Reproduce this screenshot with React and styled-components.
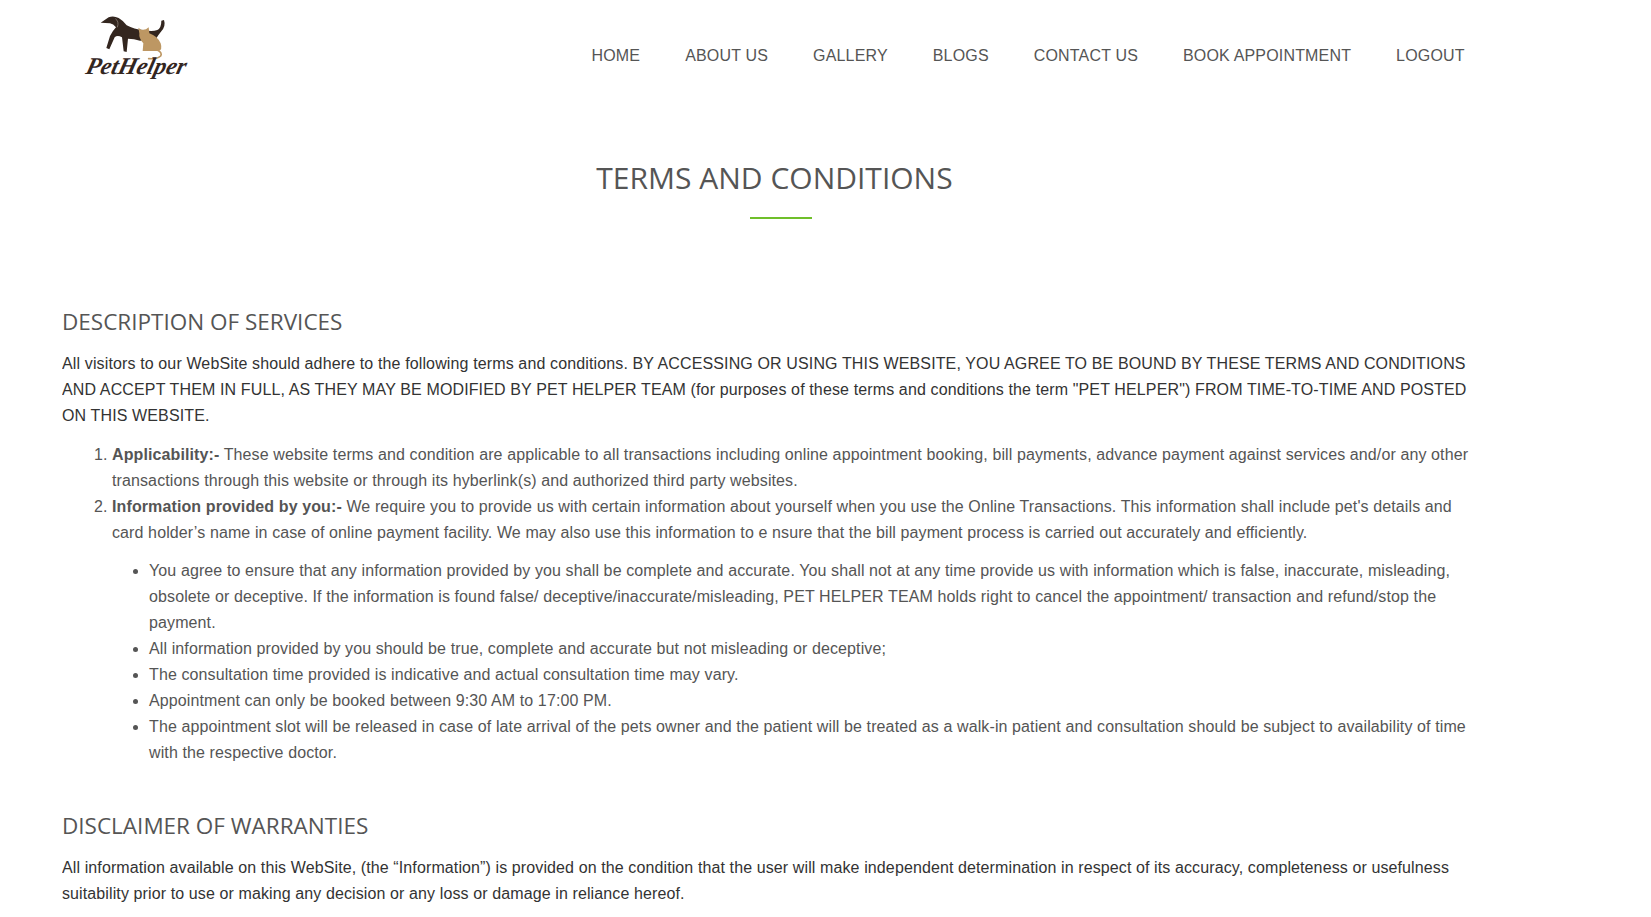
import React from 'react';
import styled, { createGlobalStyle } from 'styled-components';

const Global = createGlobalStyle`
  html, body {
    margin: 0;
    padding: 0;
    background: #fff;
    overflow: hidden;
  }
  body {
    font-family: "Liberation Sans", Arial, sans-serif;
    font-size: 16px;
    line-height: 26px;
    letter-spacing: 0.11px;
    color: #555;
  }
`;

const H = {
  Header: styled.header`
    display: flex;
    align-items: flex-start;
    height: 90px;
    padding-left: 60px;
  `,
  Logo: styled.svg`
    display: block;
    width: 160px;
    height: 90px;
    flex: none;
  `,
  Nav: styled.nav`
    display: flex;
    gap: 45px;
    margin-left: 371.5px;
    padding-top: 43px;
  `,
  NavLink: styled.a`
    color: #555;
    font-size: 16px;
    line-height: 26px;
    letter-spacing: 0.17px;
    text-transform: uppercase;
    white-space: nowrap;
  `,
};

const S = {
  Main: styled.main`
    width: 1419px;
    margin-left: 62px;
    height: 827px;
    overflow: hidden;
  `,
  Title: styled.h1`
    margin: 69px 0 0;
    padding-left: 6px;
    font-family: "Open Sans", sans-serif;
    font-size: 30px;
    font-weight: 400;
    line-height: 38px;
    letter-spacing: 0;
    color: #555;
    text-align: center;
  `,
  Rule: styled.div`
    width: 62px;
    height: 2px;
    margin: 20px 0 0 688px;
    background: #6fbf2a;
  `,
  SectionTitle: styled.h2`
    margin: ${(p) => p.$top}px 0 13px;
    font-family: "Open Sans", sans-serif;
    font-size: 22.5px;
    font-weight: 400;
    line-height: 32px;
    letter-spacing: 0;
    color: #555;
  `,
  Para: styled.p`
    margin: 0 0 13px;
    color: #333;
    letter-spacing: ${(p) => p.$tracking || 0.11}px;
  `,
  Numbered: styled.ol`
    margin: 0;
    padding-left: 50px;
  `,
  Bullets: styled.ul`
    margin: 12px 0;
    padding-left: 37px;
    list-style: disc;
  `,
  Item: styled.li``,
  Strong: styled.strong`
    font-weight: 700;
  `,
};

const navItems = ['Home', 'About us', 'Gallery', 'Blogs', 'Contact us', 'Book appointment', 'Logout'];

const PetLogo = () => (
  <H.Logo viewBox="0 0 480 270">
    {/* dog */}
    <path
      fill="#33261f"
      d="M122 68 L146 52 Q160 46 176 54 Q190 62 200 76 Q222 88 250 90 Q276 96 292 90 Q304 84 304 62 L312 60 Q318 78 304 94 Q296 104 288 116 L240 122 Q222 116 204 116 L200 156 L191 154 L186 112 Q172 104 164 112 L148 148 L139 144 L150 108 Q160 90 168 82 Q160 72 150 70 Z"
    />
    <path fill="none" stroke="#9a8f86" strokeWidth="2" d="M166 56 Q178 64 172 82" />
    {/* cat */}
    <path
      fill="#bd9763"
      d="M235 83 L245 90 L258 88 L266 82 L268 100 Q292 108 302 130 Q308 150 296 153 L248 153 L250 130 Q236 115 238 100 Z"
    />
    <path
      fill="none"
      stroke="#bd9763"
      strokeWidth="5"
      strokeLinecap="round"
      d="M292 150 Q308 158 302 168 Q292 178 266 176"
    />
    <g transform="translate(62 222) skewX(-14)">
      <text
        x="12"
        y="0"
        textLength="300"
        lengthAdjust="spacingAndGlyphs"
        fontFamily="'Liberation Serif', serif"
        fontStyle="italic"
        fontWeight="700"
        fontSize="72"
        fill="#33261f"
      >
        PetHelper
      </text>
    </g>
  </H.Logo>
);

const App = () => (
  <>
    <Global />
    <H.Header>
      <PetLogo />
      <H.Nav>
        {navItems.map((item) => (
          <H.NavLink key={item}>{item}</H.NavLink>
        ))}
      </H.Nav>
    </H.Header>
    <S.Main>
      <S.Title>TERMS AND CONDITIONS</S.Title>
      <S.Rule />
      <S.SectionTitle $top={87}>DESCRIPTION OF SERVICES</S.SectionTitle>
      <S.Para $tracking={0.13}>
        All visitors to our WebSite should adhere to the following terms and conditions. BY ACCESSING OR USING THIS
        WEBSITE, YOU AGREE TO BE BOUND BY THESE TERMS AND CONDITIONS AND ACCEPT THEM IN FULL, AS THEY MAY BE MODIFIED BY
        PET HELPER TEAM (for purposes of these terms and conditions the term "PET HELPER") FROM TIME-TO-TIME AND POSTED
        ON THIS WEBSITE.
      </S.Para>
      <S.Numbered>
        <S.Item>
          <S.Strong>Applicability:-</S.Strong> These website terms and condition are applicable to all transactions
          including online appointment booking, bill payments, advance payment against services and/or any other
          transactions through this website or through its hyberlink(s) and authorized third party websites.
        </S.Item>
        <S.Item>
          <S.Strong>Information provided by you:-</S.Strong> We require you to provide us with certain information about
          yourself when you use the Online Transactions. This information shall include pet's details and card holder’s
          name in case of online payment facility. We may also use this information to e nsure that the bill payment
          process is carried out accurately and efficiently.
          <S.Bullets>
            <S.Item>
              You agree to ensure that any information provided by you shall be complete and accurate. You shall not at
              any time provide us with information which is false, inaccurate, misleading, obsolete or deceptive. If the
              information is found false/ deceptive/inaccurate/misleading, PET HELPER TEAM holds right to cancel the
              appointment/ transaction and refund/stop the payment.
            </S.Item>
            <S.Item>
              All information provided by you should be true, complete and accurate but not misleading or deceptive;
            </S.Item>
            <S.Item>The consultation time provided is indicative and actual consultation time may vary.</S.Item>
            <S.Item>Appointment can only be booked between 9:30 AM to 17:00 PM.</S.Item>
            <S.Item>
              The appointment slot will be released in case of late arrival of the pets owner and the patient will be
              treated as a walk-in patient and consultation should be subject to availability of time with the respective
              doctor.
            </S.Item>
          </S.Bullets>
        </S.Item>
      </S.Numbered>
      <S.SectionTitle $top={44}>DISCLAIMER OF WARRANTIES</S.SectionTitle>
      <S.Para>
        All information available on this WebSite, (the “Information”) is provided on the condition that the user will
        make independent determination in respect of its accuracy, completeness or usefulness suitability prior to use
        or making any decision or any loss or damage in reliance hereof.
      </S.Para>
    </S.Main>
  </>
);

export default App;
